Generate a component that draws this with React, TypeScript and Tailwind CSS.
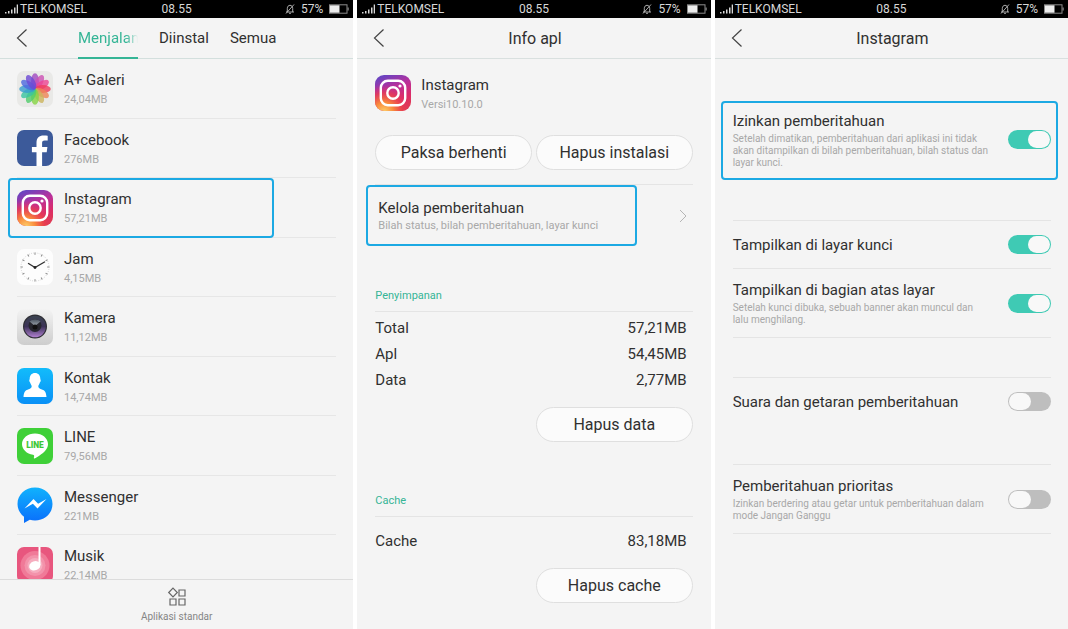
import type { ReactNode } from 'react';
import clsx from 'clsx';

type App = {
  name: string;
  size: string;
  icon: ReactNode;
  marked?: boolean;
};

const petals = [
  '#a048c0', '#cc50b4', '#ec4494', '#f03c5c', '#ee8458', '#ccb45c',
  '#84d444', '#50cc6c', '#38c4a0', '#389cd0', '#4c68e0', '#6c48d4',
];

function GalleryIcon() {
  return (
    <svg viewBox="0 0 36 36" className="size-9 shrink-0" aria-hidden="true">
      <rect width="36" height="36" rx="7" fill="#e9e9e7" />
      {petals.map((color, i) => (
        <ellipse
          key={color}
          cx="18"
          cy="10.2"
          rx="3.9"
          ry="8"
          fill={color}
          fillOpacity="0.8"
          transform={`rotate(${i * 30} 18 18)`}
        />
      ))}
    </svg>
  );
}

function FacebookIcon() {
  return (
    <svg viewBox="0 0 36 36" className="size-9 shrink-0" aria-hidden="true">
      <rect width="36" height="36" rx="7" fill="#3c5a9a" />
      <path
        fill="#fff"
        d="M19.500 36V22.300h-4.600v-5.200h4.600v-4.400c0-4.700 2.800-7.200 7-7.200 2 0 3.700.15 4.200.2v4.900h-2.900c-2.300 0-2.700 1.100-2.700 2.600v3.900h5.300l-.7 5.200h-4.600V36z"
      />
    </svg>
  );
}

function InstagramIcon({ id }: { id: string }) {
  return (
    <svg viewBox="0 0 36 36" className="size-9 shrink-0" aria-hidden="true">
      <defs>
        <linearGradient id={`${id}-base`} x1="0.3" y1="0" x2="0.7" y2="1">
          <stop offset="0" stopColor="#6a43c0" />
          <stop offset="0.35" stopColor="#b8309c" />
          <stop offset="0.7" stopColor="#dc2c68" />
          <stop offset="1" stopColor="#e03c50" />
        </linearGradient>
        <radialGradient id={`${id}-glow`} cx="0.25" cy="1.02" r="0.75">
          <stop offset="0" stopColor="#fdd06a" />
          <stop offset="0.35" stopColor="#f98a3c" />
          <stop offset="0.7" stopColor="#ec3f4c" stopOpacity="0.7" />
          <stop offset="1" stopColor="#d82f74" stopOpacity="0" />
        </radialGradient>
      </defs>
      <rect width="36" height="36" rx="9" fill={`url(#${id}-base)`} />
      <rect width="36" height="36" rx="9" fill={`url(#${id}-glow)`} />
      <g fill="none" stroke="#fff" strokeWidth="2.4">
        <rect x="5.8" y="5.8" width="24.4" height="24.4" rx="7" />
        <circle cx="18" cy="18" r="5.7" />
      </g>
      <circle cx="25" cy="11" r="1.6" fill="#fff" />
    </svg>
  );
}

function ClockIcon() {
  return (
    <svg viewBox="0 0 36 36" className="size-9 shrink-0" aria-hidden="true">
      <rect width="36" height="36" rx="7" fill="#fdfdfd" />
      {Array.from({ length: 12 }, (_, i) => (
        <line
          key={i}
          x1="18"
          y1="3.5"
          x2="18"
          y2="5.8"
          stroke="#8a8a8a"
          strokeWidth="1"
          transform={`rotate(${i * 30} 18 18)`}
        />
      ))}
      <circle cx="18" cy="18" r="14" fill="none" stroke="#c8c8c8" strokeWidth="1" strokeDasharray="0.7 1.5" />
      <path d="M11.5 14.5 18 18.5 27.5 13" fill="none" stroke="#333" strokeWidth="1.4" strokeLinecap="round" />
      <circle cx="18" cy="18.5" r="1.4" fill="#222" />
    </svg>
  );
}

function CameraIcon() {
  return (
    <svg viewBox="0 0 36 36" className="size-9 shrink-0" aria-hidden="true">
      <defs>
        <linearGradient id="camera-body" x1="0" y1="0" x2="0" y2="1">
          <stop offset="0" stopColor="#f3f3f3" />
          <stop offset="1" stopColor="#cdcdcd" />
        </linearGradient>
        <linearGradient id="camera-lens" x1="0" y1="0" x2="0" y2="1">
          <stop offset="0" stopColor="#3b4450" />
          <stop offset="0.5" stopColor="#3c3258" />
          <stop offset="1" stopColor="#b080d0" />
        </linearGradient>
        <linearGradient id="camera-glare" x1="0" y1="0" x2="0" y2="1">
          <stop offset="0" stopColor="#4a5460" />
          <stop offset="1" stopColor="#a0a8b0" />
        </linearGradient>
      </defs>
      <rect width="36" height="36" rx="7" fill="url(#camera-body)" />
      <circle cx="18" cy="17.5" r="12" fill="#2d2d33" />
      <circle cx="18" cy="17.5" r="10.8" fill="url(#camera-lens)" />
      <circle cx="18" cy="16.5" r="6.5" fill="#26262e" />
      <path d="M12.500 12.500a8 8 0 0 1 11 0L18 17z" fill="url(#camera-glare)" />
      <circle cx="18" cy="18" r="2.5" fill="#111" />
    </svg>
  );
}

function ContactIcon() {
  return (
    <svg viewBox="0 0 36 36" className="size-9 shrink-0" aria-hidden="true">
      <defs>
        <linearGradient id="contact-bg" x1="0" y1="0" x2="0" y2="1">
          <stop offset="0" stopColor="#12bcfb" />
          <stop offset="1" stopColor="#0a90f6" />
        </linearGradient>
      </defs>
      <rect width="36" height="36" rx="7" fill="url(#contact-bg)" />
      <path
        fill="#fff"
        d="M18 5c3.300 0 5.300 2.300 5.300 5.800 0 1 .6 1 .4 2.200-.2 1-.7 1.100-.9 1.800-.4 1.400-1.500 2.500-1.500 3.700 0 1.700 1.600 2.200 3.700 2.900 2.800.9 4.200 2.600 4.500 7.600h-23c.3-5 1.700-6.700 4.500-7.600 2.100-.7 3.700-1.200 3.700-2.900 0-1.200-1.100-2.300-1.500-3.700-.2-.7-.7-.8-.9-1.800-.2-1.200.4-1.200.4-2.200C12.700 7.300 14.700 5 18 5z"
      />
    </svg>
  );
}

function LineIcon() {
  return (
    <svg viewBox="0 0 36 36" className="size-9 shrink-0" aria-hidden="true">
      <rect width="36" height="36" rx="7" fill="#3fd038" />
      <path
        fill="#fff"
        d="M18 5.500c7.200 0 13 4.700 13 10.600 0 2.400-.9 4.500-2.800 6.600-2.700 3.100-8.800 6.900-10.200 7.500-1.400.6-1.200-.4-1.100-.7l.2-1.100c0-.3.100-.7 0-1-.1-.3-.7-.5-1.100-.6C9.800 26 5 21.500 5 16.100 5 10.200 10.800 5.500 18 5.500z"
      />
      <text x="18" y="19.5" textAnchor="middle" fontSize="8.4" fontWeight="900" fontFamily="Roboto, sans-serif" fill="#3fc838">
        LINE
      </text>
    </svg>
  );
}

function MessengerIcon() {
  return (
    <svg viewBox="0 0 36 36" className="size-9 shrink-0" aria-hidden="true">
      <defs>
        <linearGradient id="messenger-bg" x1="0" y1="0" x2="0" y2="1">
          <stop offset="0" stopColor="#10b2fd" />
          <stop offset="1" stopColor="#0a6efb" />
        </linearGradient>
      </defs>
      <path
        fill="url(#messenger-bg)"
        d="M18 .5c9.800 0 17.500 7.200 17.500 16.500S27.800 33.500 18 33.500c-1.900 0-3.600-.2-5.200-.7L7 36v-6.300C3 26.700.5 22.200.5 17 .5 7.700 8.200.5 18 .5z"
      />
      <path fill="#fff" d="m7.500 21.500 9-9.500 4.600 4.700 8.400-4.700-9 9.500-4.600-4.700z" />
    </svg>
  );
}

function MusicIcon() {
  return (
    <svg viewBox="0 0 36 36" className="size-9 shrink-0" aria-hidden="true">
      <rect width="36" height="36" rx="7" fill="#e8567e" />
      <circle cx="18" cy="18.5" r="14.5" fill="#f07a98" />
      <circle cx="18" cy="18.5" r="10.5" fill="#f393ab" />
      <circle cx="18" cy="18.5" r="7.5" fill="#f6adbf" />
      <path d="M21.500 0h2v18h-2z" fill="#fff" />
      <ellipse cx="17.8" cy="18.8" rx="5.8" ry="4.5" fill="#fff" transform="rotate(-20 17.8 18.8)" />
    </svg>
  );
}

const apps: App[] = [
  { name: 'A+ Galeri', size: '24,04MB', icon: <GalleryIcon /> },
  { name: 'Facebook', size: '276MB', icon: <FacebookIcon /> },
  { name: 'Instagram', size: '57,21MB', icon: <InstagramIcon id="list" />, marked: true },
  { name: 'Jam', size: '4,15MB', icon: <ClockIcon /> },
  { name: 'Kamera', size: '11,12MB', icon: <CameraIcon /> },
  { name: 'Kontak', size: '14,74MB', icon: <ContactIcon /> },
  { name: 'LINE', size: '79,56MB', icon: <LineIcon /> },
  { name: 'Messenger', size: '221MB', icon: <MessengerIcon /> },
  { name: 'Musik', size: '22,14MB', icon: <MusicIcon /> },
];

function StatusBar() {
  return (
    <div className="grid h-[18px] shrink-0 grid-cols-3 items-center bg-black px-1 text-xs text-[#d8d8d8]">
      <div className="flex items-center gap-0.5">
        <svg viewBox="0 0 14 10" className="h-2.5 w-3.5" fill="#d8d8d8" aria-hidden="true">
          <path d="M1 8h1.500v1.500H1zM4 7h1.500v2.500H4zM7 5.500h1.500v4H7zM10 3.500h1.500v6H10zM12.700 0.500h1.300v9h-1.300z" />
        </svg>
        <span>TELKOMSEL</span>
      </div>
      <span className="text-center">08.55</span>
      <div className="flex items-center justify-end gap-1.5">
        <svg viewBox="0 0 10 10" className="size-2.5" fill="none" stroke="#bdbdbd" strokeWidth="0.9" aria-hidden="true">
          <path d="M1 8h8M2.300 8V4.500C2.300 2.500 3.500 1.300 5 1.300s2.700 1.200 2.700 3.200V8M4 9.300h2M9 0.500 1 9.500" />
        </svg>
        <span>57%</span>
        <svg viewBox="0 0 20 10" className="h-2.5 w-5" aria-hidden="true">
          <rect x="0.5" y="0.8" width="17.5" height="8.4" fill="none" stroke="#8c8c8c" />
          <rect x="1" y="1.3" width="9.5" height="7.4" fill="#ededed" />
          <rect x="18.5" y="3.5" width="1.2" height="3" fill="#8c8c8c" />
        </svg>
      </div>
    </div>
  );
}

function BackButton() {
  return (
    <button type="button" aria-label="Kembali" className="flex w-11 shrink-0 items-center pl-4">
      <svg viewBox="0 0 12 20" className="h-5 w-3" fill="none" stroke="#444" strokeWidth="1.2" aria-hidden="true">
        <path d="M10.500 1.500 1.500 10l9 8.500" />
      </svg>
    </button>
  );
}

function TitleBar({ title }: { title: string }) {
  return (
    <header className="flex h-[41px] shrink-0 border-b border-[#d9e0df]">
      <BackButton />
      <h1 className="flex-1 self-center pt-0.5 pr-[42px] text-center text-base">{title}</h1>
    </header>
  );
}

function Phone({ children }: { children: ReactNode }) {
  return (
    <section className="flex min-h-0 min-w-0 flex-col bg-[#f4f4f4]">
      <StatusBar />
      {children}
    </section>
  );
}

function Highlight({ className }: { className: string }) {
  return <span className={clsx('pointer-events-none absolute rounded border-2 border-[#1ca9e3]', className)} />;
}

function AppRow({ app }: { app: App }) {
  return (
    <li className="relative h-15 shrink-0 px-[17px] even:h-[59px]">
      <div className="flex h-full items-center gap-[11px] border-b border-[#e6e6e6]">
        {app.icon}
        <div className="pt-px">
          <p className="text-[15px] leading-5">{app.name}</p>
          <p className="mt-0.5 text-[11px] leading-4 text-[#a8a8a8]">{app.size}</p>
        </div>
      </div>
      {app.marked && <Highlight className="inset-y-0 left-2 right-[79px]" />}
    </li>
  );
}

function AppListScreen() {
  return (
    <Phone>
      <header className="flex h-[41px] shrink-0 border-b border-[#d3dfdd] text-[15px]">
        <BackButton />
        <nav className="ml-[34px] -mb-px flex gap-[21px]">
          <button type="button" className="w-15 overflow-hidden whitespace-nowrap border-b-2 border-[#35b596] pt-0.5 text-left text-[#35b596]">
            <span className="block mask-r-from-80% mask-r-to-100%">Menjalan</span>
          </button>
          <button type="button">Diinstal</button>
          <button type="button">Semua</button>
        </nav>
      </header>
      <ul className="flex min-h-0 flex-1 flex-col overflow-hidden">
        {apps.map((app) => (
          <AppRow key={app.name} app={app} />
        ))}
      </ul>
      <footer className="flex h-[50px] shrink-0 justify-center border-t border-[#dcdcdc]">
        <button type="button" className="flex flex-col items-center justify-center gap-0.5 pt-0.5 text-[10px] leading-4 text-[#858585]">
          <svg viewBox="0 0 20 20" className="size-5" fill="none" stroke="#666" strokeWidth="1.2" aria-hidden="true">
            <path d="M6 1.200 10.300 5.500 6 9.800 1.700 5.500zM12 3h6v6h-6zM3 12h6v6H3zM12 12h6v6h-6z" />
          </svg>
          Aplikasi standar
        </button>
      </footer>
    </Phone>
  );
}

function PillButton({ children, className }: { children: ReactNode; className?: string }) {
  return (
    <button
      type="button"
      className={clsx('h-[35px] rounded-full border border-[#dfdfdf] bg-[#fbfbfb] pt-px text-base', className)}
    >
      {children}
    </button>
  );
}

function StorageSection({ title, rows, action, className }: { title: string; rows: [string, string][]; action: string; className?: string }) {
  return (
    <section>
      <h2 className="border-b border-[#e4e4e4] pt-px pb-[7px] text-[11px] leading-4 text-[#35b596]">{title}</h2>
      <dl className={clsx('pr-1.5 text-[15px] leading-[26px]', className)}>
        {rows.map(([label, value]) => (
          <div key={label} className="flex justify-between">
            <dt>{label}</dt>
            <dd>{value}</dd>
          </div>
        ))}
      </dl>
      <div className="grid grid-cols-2 gap-1">
        <PillButton className="col-start-2">{action}</PillButton>
      </div>
    </section>
  );
}

function AppInfoScreen() {
  return (
    <Phone>
      <TitleBar title="Info apl" />
      <div className="px-[18px]">
        <div className="flex items-center gap-2.5 pt-3.5">
          <InstagramIcon id="info" />
          <div className="pt-0.5">
            <p className="text-[15px] leading-5">Instagram</p>
            <p className="mt-0.5 text-[11px] leading-4 text-[#a8a8a8]">Versi10.10.0</p>
          </div>
        </div>
        <div className="mt-[22px] grid grid-cols-2 gap-1">
          <PillButton>Paksa berhenti</PillButton>
          <PillButton>Hapus instalasi</PillButton>
        </div>
        <a href="#kelola" className="relative mt-3.5 flex h-[62px] items-center justify-between border-t border-[#e4e4e4] pl-[3px] pr-1.5">
          <div>
            <p className="text-[15px] leading-5">Kelola pemberitahuan</p>
            <p className="text-[11px] leading-4 text-[#a8a8a8]">Bilah status, bilah pemberitahuan, layar kunci</p>
          </div>
          <svg viewBox="0 0 8 14" className="h-3.5 w-2" fill="none" stroke="#b5b5b5" aria-hidden="true">
            <path d="M1 1l6 6-6 6" />
          </svg>
          <Highlight className="inset-y-0 -left-[9px] right-14" />
        </a>
        <div className="mt-[41px]">
          <StorageSection
            title="Penyimpanan"
            rows={[['Total', '57,21MB'], ['Apl', '54,45MB'], ['Data', '2,77MB']]}
            action="Hapus data"
            className="pt-[3px] pb-3.5"
          />
        </div>
        <div className="mt-[50px]">
          <StorageSection title="Cache" rows={[['Cache', '83,18MB']]} action="Hapus cache" className="pt-[11px] pb-3.5" />
        </div>
      </div>
    </Phone>
  );
}

type SettingProps = {
  id: string;
  title: string;
  description?: string;
  on?: boolean;
  className: string;
  children?: ReactNode;
};

function Setting({ id, title, description, on, className, children }: SettingProps) {
  return (
    <div className={clsx('relative flex items-center justify-between gap-1 border-[#e4e4e4]', className)}>
      <label htmlFor={id}>
        <span className="block text-[15px] leading-5">{title}</span>
        {description && <span className="block whitespace-pre-line pt-0.5 text-[10px] leading-3 text-[#a8a8a8]">{description}</span>}
      </label>
      <input
        id={id}
        type="checkbox"
        role="switch"
        defaultChecked={on}
        className="h-[19px] w-[43px] shrink-0 appearance-none rounded-full bg-[#bebebe] p-px before:block before:h-[17px] before:w-[22px] before:rounded-full before:bg-[#f8f8f8] checked:bg-[#3fcab4] checked:before:ml-auto"
      />
      {children}
    </div>
  );
}

function NotificationScreen() {
  return (
    <Phone>
      <TitleBar title="Instagram" />
      <div className="pl-[18px] pr-[17px]">
        <Setting
          id="izinkan"
          title="Izinkan pemberitahuan"
          description={'Setelah dimatikan, pemberitahuan dari aplikasi ini tidak\nakan ditampilkan di bilah pemberitahuan, bilah status dan\nlayar kunci.'}
          on
          className="mt-[42px] h-[79px] pb-0.5"
        >
          <Highlight className="inset-y-0 -left-3 -right-[7px]" />
        </Setting>
        <Setting id="layar-kunci" title="Tampilkan di layar kunci" on className="mt-10 h-12 border-t" />
        <Setting
          id="atas-layar"
          title="Tampilkan di bagian atas layar"
          description={'Setelah kunci dibuka, sebuah banner akan muncul dan\nlalu menghilang.'}
          on
          className="h-[70px] border-y"
        />
        <Setting id="suara" title="Suara dan getaran pemberitahuan" className="mt-[39px] h-12 border-t" />
        <Setting
          id="prioritas"
          title="Pemberitahuan prioritas"
          description={'Izinkan berdering atau getar untuk pemberitahuan dalam\nmode Jangan Ganggu'}
          className="mt-[39px] h-[70px] border-y"
        />
      </div>
    </Phone>
  );
}

export default function App() {
  return (
    <main className="grid h-screen grid-cols-3 gap-1 overflow-hidden bg-white font-[Roboto,sans-serif] text-[#303030]">
      <AppListScreen />
      <AppInfoScreen />
      <NotificationScreen />
    </main>
  );
}
